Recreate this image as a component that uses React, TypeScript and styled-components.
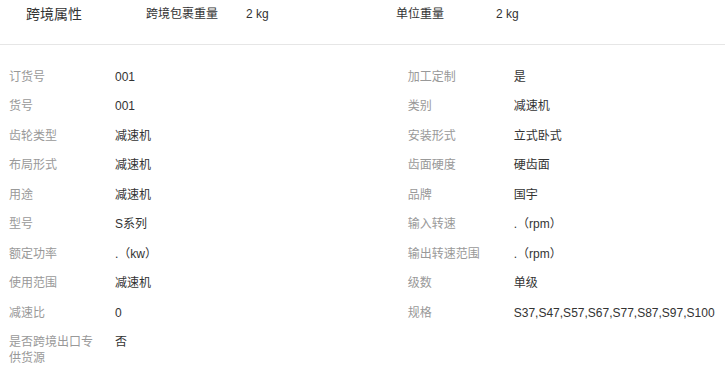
import styled, { createGlobalStyle } from "styled-components";

interface Attr {
  label: string;
  value: string;
}

const headerAttrs: Attr[] = [
  { label: "跨境包裹重量", value: "2 kg" },
  { label: "单位重量", value: "2 kg" },
];

const attrs: Attr[] = [
  { label: "订货号", value: "001" },
  { label: "加工定制", value: "是" },
  { label: "货号", value: "001" },
  { label: "类别", value: "减速机" },
  { label: "齿轮类型", value: "减速机" },
  { label: "安装形式", value: "立式卧式" },
  { label: "布局形式", value: "减速机" },
  { label: "齿面硬度", value: "硬齿面" },
  { label: "用途", value: "减速机" },
  { label: "品牌", value: "国宇" },
  { label: "型号", value: "S系列" },
  { label: "输入转速", value: ".（rpm）" },
  { label: "额定功率", value: ".（kw）" },
  { label: "输出转速范围", value: ".（rpm）" },
  { label: "使用范围", value: "减速机" },
  { label: "级数", value: "单级" },
  { label: "减速比", value: "0" },
  { label: "规格", value: "S37,S47,S57,S67,S77,S87,S97,S100" },
  { label: "是否跨境出口专供货源", value: "否" },
];

const App = () => {
  return (
    <>
      <GlobalStyle />
      <Wrapper>
        <Header>
          <Title>跨境属性</Title>
          {headerAttrs.map((a) => (
            <HeaderItem key={a.label}>
              <HeaderLabel>{a.label}</HeaderLabel>
              <HeaderValue>{a.value}</HeaderValue>
            </HeaderItem>
          ))}
        </Header>
        <Grid>
          {attrs.map((a) => (
            <Row key={a.label}>
              <Label>{a.label}</Label>
              <Value>{a.value}</Value>
            </Row>
          ))}
        </Grid>
      </Wrapper>
    </>
  );
};

export default App;

const GlobalStyle = createGlobalStyle`
  body {
    margin: 0;
    background: #fff;
    font-family: "Liberation Sans", Arial, "Noto Sans CJK SC", sans-serif;
    color: #333;
  }
`;

const Wrapper = styled.div`
  width: 725px;
`;

const Header = styled.div`
  display: flex;
  align-items: flex-start;
  height: 45px;
  padding-top: 6px;
  box-sizing: border-box;
  border-bottom: 1px solid #e6e6e6;
  font-size: 12px;
  line-height: 16px;
`;

const Title = styled.div`
  width: 120px;
  padding-left: 26px;
  font-size: 14px;
  font-weight: 400;
  color: #333;
`;

const HeaderItem = styled.div`
  display: flex;
  width: 250px;
`;

const HeaderLabel = styled.span`
  width: 100px;
  color: #333;
`;

const HeaderValue = styled.span`
  color: #333;
`;

const Grid = styled.div`
  display: grid;
  grid-template-columns: 55% 45%;
  padding-top: 17px;
  font-size: 12px;
  line-height: 16px;
`;

const Row = styled.div`
  display: flex;
  align-items: flex-start;
  padding: 6.75px 0 6.75px 9px;
`;

const Label = styled.span`
  flex: none;
  width: 92px;
  margin-right: 14px;
  color: #999;
`;

const Value = styled.span`
  color: #333;
  white-space: nowrap;
`;
